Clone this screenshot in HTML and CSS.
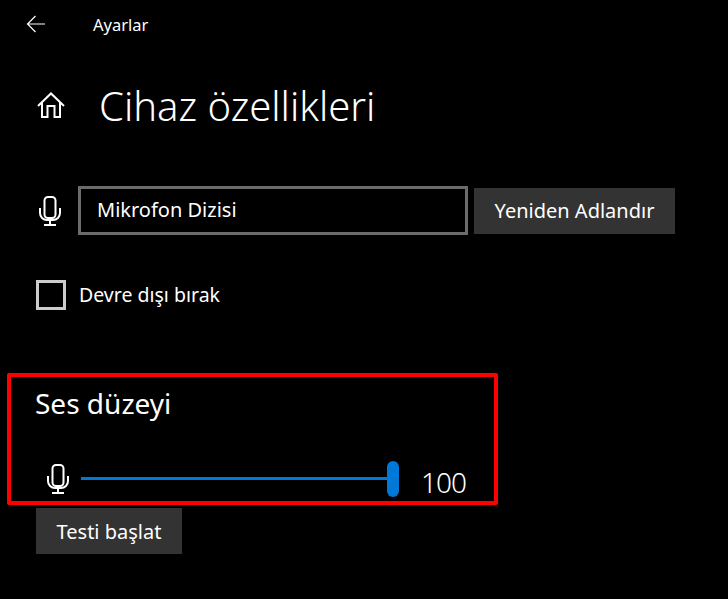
FILE: index.html
```html
<!DOCTYPE html>
<html lang="en">
<head>
    <meta charset="UTF-8">
    <meta name="viewport" content="width=device-width, initial-scale=1.0">
    <title>Ayarlar</title>
    <link rel="stylesheet" href="styles.css">
</head>
<body>
    <header class="topBar">
        <svg class="backIcon" width="20" height="18" viewBox="0 0 20 18" fill="none" stroke="#fff" stroke-width="1.2">
            <path d="M19 9H1.5M9.5 1L1.5 9l8 8"/>
        </svg>
        <span class="appName">Ayarlar</span>
    </header>

    <div class="titleRow">
        <svg class="homeIcon" width="28" height="26" viewBox="0 0 28 26" fill="none" stroke="#fff" stroke-width="2">
            <path d="M1 14L14 1.500l13 12.500M5 10.500V25h5.500V14h7v11H23V10.500"/>
        </svg>
        <h1>Cihaz özellikleri</h1>
    </div>

    <div class="nameRow">
        <svg class="micIcon" width="22" height="30" viewBox="0 0 22 30" fill="none" stroke="#fff" stroke-width="2">
            <rect x="5.500" y="1" width="11" height="21" rx="3.500"/>
            <path d="M1 12v5a7 7 0 0 0 7 7h6a7 7 0 0 0 7-7v-5M11 24v5M5 29h12"/>
        </svg>
        <div class="nameInput">Mikrofon Dizisi</div>
        <div class="btn renameBtn">Yeniden Adlandır</div>
    </div>

    <label class="checkRow">
        <span class="checkBox"></span>
        <span class="checkText">Devre dışı bırak</span>
    </label>

    <section class="volumeBox">
        <h2>Ses düzeyi</h2>
        <div class="volumeRow">
            <svg class="micIcon" width="22" height="30" viewBox="0 0 22 30" fill="none" stroke="#fff" stroke-width="2">
                <rect x="5.500" y="1" width="11" height="21" rx="3.500"/>
                <path d="M1 12v5a7 7 0 0 0 7 7h6a7 7 0 0 0 7-7v-5M11 24v5M5 29h12"/>
            </svg>
            <div class="slider">
                <div class="track"></div>
                <div class="thumb"></div>
            </div>
            <span class="volumeValue">100</span>
        </div>
    </section>

    <div class="btn testBtn">Testi başlat</div>
</body>
</html>
```

FILE: styles.css
```css
*{
    margin: 0;
    padding: 0;
    box-sizing: border-box;
    font-family: "Noto Sans", sans-serif;
}
body{
    background-color: #000;
    color: #fff;
    width: 728px;
    height: 599px;
    overflow: hidden;
}
.topBar{
    display: flex;
    align-items: center;
    height: 48px;
    padding-left: 26px;
}
.appName{
    font-size: 16.500px;
    margin-left: 47px;
}
.titleRow{
    display: flex;
    align-items: center;
    height: 52px;
    margin-top: 31px;
    padding-left: 37px;
}
.titleRow h1{
    font-size: 40px;
    font-weight: 300;
    margin-left: 34px;
}
.nameRow{
    display: flex;
    align-items: center;
    margin-top: 55px;
    padding-left: 39px;
}
.nameInput{
    width: 390px;
    height: 49px;
    margin-left: 17px;
    padding-left: 16px;
    border: 3px solid #6b6b6b;
    font-size: 20px;
    line-height: 42px;
}
.btn{
    background-color: #333;
    display: flex;
    align-items: center;
    justify-content: center;
    height: 46px;
    font-size: 20px;
}
.renameBtn{
    width: 201px;
    margin-left: 6px;
}
.checkRow{
    display: flex;
    align-items: center;
    gap: 13px;
    margin-top: 45px;
    margin-left: 36px;
    font-size: 19.500px;
}
.checkText{
    margin-bottom: 2px;
}
.checkBox{
    width: 30px;
    height: 30px;
    border: 3px solid #ccc;
}
.volumeBox{
    width: 491px;
    height: 132px;
    margin-top: 63px;
    margin-left: 7px;
    padding: 6px 0 0 24px;
    border: 4px solid #f00;
    border-radius: 2px;
}
.volumeBox h2{
    font-size: 28px;
    font-weight: 400;
    line-height: 40px;
}
.volumeRow{
    display: flex;
    align-items: center;
    margin-top: 37px;
    padding-left: 12px;
}
.slider{
    position: relative;
    width: 318px;
    height: 36px;
    margin-left: 12px;
}
.track{
    position: absolute;
    top: 16px;
    left: 0;
    width: 310px;
    height: 3px;
    background-color: #0078d7;
}
.thumb{
    position: absolute;
    top: 0;
    right: 0;
    width: 12px;
    height: 36px;
    border-radius: 6px;
    background-color: #0078d7;
}
.volumeValue{
    font-size: 28px;
    font-weight: 300;
    letter-spacing: -1px;
    margin-left: 22px;
    position: relative;
    top: 3px;
}
.testBtn{
    width: 146px;
    margin-top: 3px;
    margin-left: 36px;
}
```
